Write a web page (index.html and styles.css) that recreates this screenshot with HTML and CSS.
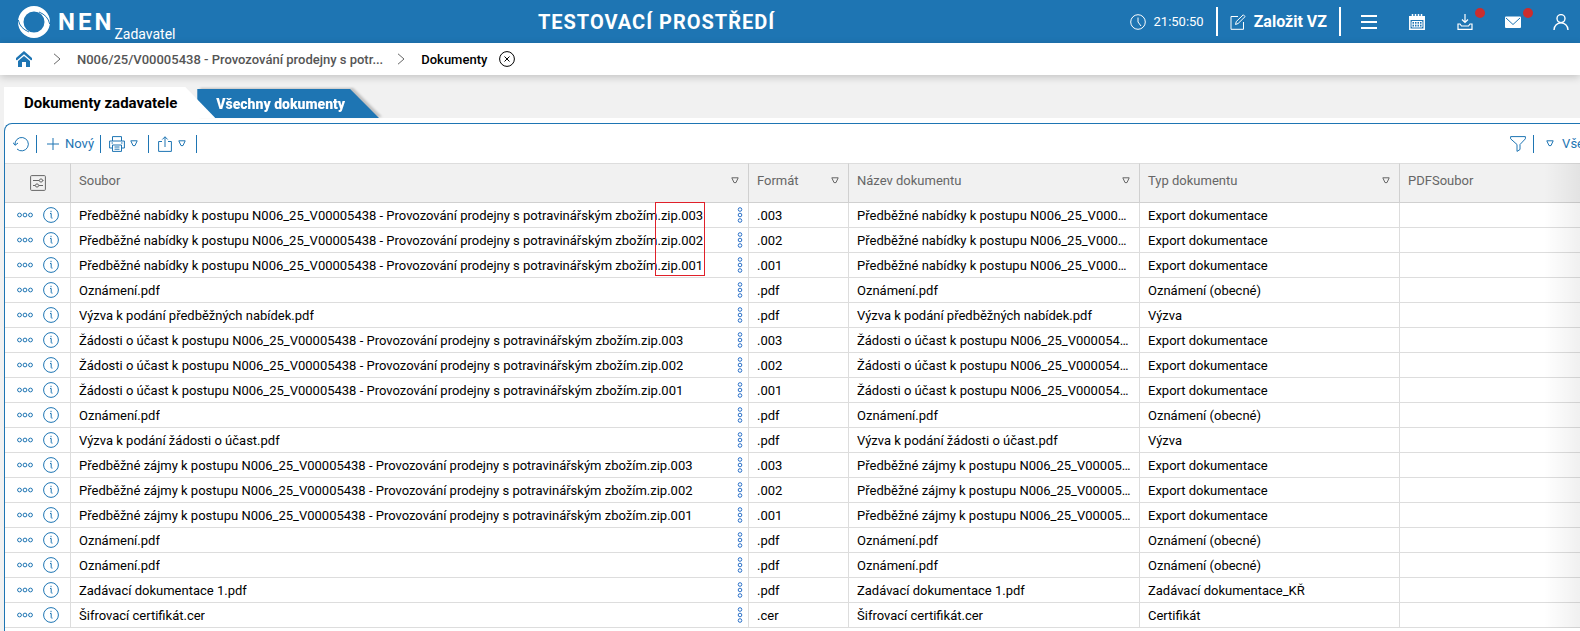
FILE: index.html
```html
<!DOCTYPE html>
<html lang="cs">
<head>
    <meta charset="UTF-8">
    <meta name="viewport" content="width=device-width, initial-scale=1.0">
    <title>NEN - Dokumenty</title>
    <link rel="stylesheet" href="styles.css">
</head>
<body>
    <svg class="sprite" aria-hidden="true">
        <symbol id="dots" viewBox="0 0 16 6"><circle cx="2.5" cy="3" r="1.9"/><circle cx="8" cy="3" r="1.9"/><circle cx="13.5" cy="3" r="1.9"/></symbol>
        <symbol id="vdots" viewBox="0 0 6 16"><circle cx="3" cy="2.5" r="1.8"/><circle cx="3" cy="8" r="1.8"/><circle cx="3" cy="13.5" r="1.8"/></symbol>
        <symbol id="info" viewBox="0 0 16 16"><circle cx="8" cy="8" r="7.4"/><path d="M7 6.5h1.2v4q0 .9 1.300 .6M8 3.800v1.400"/></symbol>
        <symbol id="tri" viewBox="0 0 8 7"><path d="M.8 .8h6.4L5 5.600H3z"/></symbol>
        <symbol id="chevron" viewBox="0 0 8 12"><path d="M1 .8l6 5.2-6 5.2"/></symbol>
    </svg>

    <header class="topbar">
        <a class="brand" href="#">
            <svg class="logo" viewBox="0 0 32 32" aria-hidden="true">
                <path class="ring" fill-rule="evenodd" d="M16 0a16 16 0 1 1 0 32a16 16 0 1 1 0-32zM16 5.500a10.500 10.500 0 1 0 0 21a10.500 10.500 0 1 0 0-21z"/>
                <path class="cut" d="M.3 14Q2 22.500 11 26M31.700 18Q30 9.500 21 6"/>
            </svg>
            <span class="brand-name">NEN</span>
            <span class="brand-role">Zadavatel</span>
        </a>
        <div class="env">TESTOVACÍ PROSTŘEDÍ</div>
        <div class="time">
            <svg class="icon" viewBox="0 0 16 16"><circle cx="8" cy="8" r="7.300"/><path d="M8 3.500V8l3 4"/></svg>
            21:50:50
        </div>
        <button class="create">
            <svg class="icon" viewBox="0 0 16 16"><path d="M8 2.500H1v12.800h12.500V8M5.500 10.500l.8-3 7-6.700 1.800 1.800-7 6.900z"/></svg>
            Založit VZ
        </button>
        <nav class="tools">
            <button aria-label="Menu"><svg class="icon thick" viewBox="0 0 16 16"><path d="M0 2h16M0 8h16M0 14h16"/></svg></button>
            <button aria-label="Kalendář"><svg class="icon" viewBox="0 0 16 16"><path d="M0 2h16v4H0z" fill="currentColor" stroke="none"/><path d="M.8 3v12.200h14.400V3M3.500 0v4M6.500 0v4M9.500 0v4M12.500 0v4" stroke-width="1.500"/><path d="M3 7.500h10v5.500H3zM5.500 7.500V13M8 7.500V13M10.500 7.500V13M3 10.200h10"/></svg></button>
            <button class="has-badge" aria-label="Stažené soubory"><svg class="icon" viewBox="0 0 16 16"><path d="M8 0v8M5 5.500l3 3 3-3M3 10H1v5.300h14V10h-2l-1.500 2h-7z" stroke-width="1.200"/></svg></button>
            <button class="has-badge" aria-label="Zprávy"><svg class="icon" viewBox="0 0 16 16"><rect x="0" y="2.500" width="16" height="11.500" rx="1" fill="currentColor" stroke="none"/><path class="fold" d="M1 4l7 6.500L15 4"/></svg></button>
            <button aria-label="Uživatel"><svg class="icon" viewBox="0 0 16 16"><circle cx="8" cy="4.600" r="4" stroke-width="1.400"/><path d="M1 16c0-9.500 14-9.500 14 0" stroke-width="1.400"/></svg></button>
        </nav>
    </header>

    <nav class="breadcrumb">
        <a class="home" href="#" aria-label="Domů"><svg viewBox="0 0 16 16"><path d="M8 0L0 7v2l1 .3L8 3.300l7 6 1-.3V7z"/><path d="M2 10l6-5 6 5v6h-4v-5H6v5H2z"/></svg></a>
        <svg class="chevron"><use href="#chevron"/></svg>
        <a class="parent" href="#">N006/25/V00005438 - Provozování prodejny s potr...</a>
        <svg class="chevron"><use href="#chevron"/></svg>
        <span class="current">Dokumenty</span>
        <button class="close" aria-label="Zavřít"><svg class="icon" viewBox="0 0 16 16"><circle cx="8" cy="8" r="7.400"/><path d="M5.500 5.500l5 5M10.500 5.500l-5 5"/></svg></button>
    </nav>

    <div class="tabs">
        <button class="tab active"><span>Dokumenty zadavatele</span></button>
        <button class="tab"><span>Všechny dokumenty</span></button>
    </div>

    <main class="content">
        <section class="panel">
            <div class="toolbar">
                <button aria-label="Obnovit"><svg class="icon" viewBox="0 0 16 16"><path d="M2 9A6.700 6.700 0 1 1 4 13M0 6.500l2 2.800L5 7"/></svg></button>
                <button class="new"><svg class="icon" viewBox="0 0 16 16"><path d="M8 2v12M2 8h12"/></svg>Nový</button>
                <button aria-label="Tisk"><svg class="icon" viewBox="0 0 16 16"><path d="M3.500 5V.6h9V5M3.500 12H.6V5h14.800v7h-2.900M3.500 9h9v6.400h-9zM5.500 11h5M5.500 13.200h5M12 7h1.500M2.500 7H4"/></svg><svg class="tri"><use href="#tri"/></svg></button>
                <button aria-label="Export"><svg class="icon" viewBox="0 0 16 16"><path d="M5 5.500H1.600v9.900h12.800V5.500H11M8 11V.8M5.300 3.500L8 .8l2.700 2.700"/></svg><svg class="tri"><use href="#tri"/></svg></button>
                <button class="filter" aria-label="Filtr"><svg class="icon" viewBox="0 0 16 16"><path d="M.6.6h14.800v2.200L10 8.500v5L7 15.400V8.500L.6 2.800z"/></svg></button>
                <button class="view"><svg class="tri"><use href="#tri"/></svg>Vše</button>
            </div>

            <div class="grid-wrap">
                <table class="grid">
                    <colgroup>
                        <col class="c-actions"><col class="c-file"><col class="c-format"><col class="c-name"><col class="c-type"><col>
                    </colgroup>
                    <thead>
                        <tr>
                            <th class="actions"><button aria-label="Nastavení sloupců"><svg class="icon" viewBox="0 0 16 16"><rect x=".6" y=".6" width="14.800" height="14.800" rx="1"/><path d="M3 5.500h6M12.500 5.500h1M3 10.500h2M9 10.500h4"/><circle cx="11" cy="5.500" r="1.600"/><circle cx="7" cy="10.500" r="1.600"/></svg></button></th>
                            <th><div class="cell">Soubor<svg class="tri"><use href="#tri"/></svg></div></th>
                            <th><div class="cell">Formát<svg class="tri"><use href="#tri"/></svg></div></th>
                            <th><div class="cell">Název dokumentu<svg class="tri"><use href="#tri"/></svg></div></th>
                            <th><div class="cell">Typ dokumentu<svg class="tri"><use href="#tri"/></svg></div></th>
                            <th><div class="cell">PDFSoubor</div></th>
                        </tr>
                    </thead>
                    <tbody id="rows"></tbody>
                </table>
                <div class="mark"></div>
            </div>
        </section>
    </main>
    <script src="rows.js"></script>
</body>
</html>
```

FILE: rows.js
```javascript
var suffix = ' k postupu N006_25_V00005438 - Provozování prodejny s potravinářským zbožím.zip';
var files = [
    ['Předběžné nabídky' + suffix, '.003', 'Export dokumentace'],
    ['Předběžné nabídky' + suffix, '.002', 'Export dokumentace'],
    ['Předběžné nabídky' + suffix, '.001', 'Export dokumentace'],
    ['Oznámení', '.pdf', 'Oznámení (obecné)'],
    ['Výzva k podání předběžných nabídek', '.pdf', 'Výzva'],
    ['Žádosti o účast' + suffix, '.003', 'Export dokumentace'],
    ['Žádosti o účast' + suffix, '.002', 'Export dokumentace'],
    ['Žádosti o účast' + suffix, '.001', 'Export dokumentace'],
    ['Oznámení', '.pdf', 'Oznámení (obecné)'],
    ['Výzva k podání žádosti o účast', '.pdf', 'Výzva'],
    ['Předběžné zájmy' + suffix, '.003', 'Export dokumentace'],
    ['Předběžné zájmy' + suffix, '.002', 'Export dokumentace'],
    ['Předběžné zájmy' + suffix, '.001', 'Export dokumentace'],
    ['Oznámení', '.pdf', 'Oznámení (obecné)'],
    ['Oznámení', '.pdf', 'Oznámení (obecné)'],
    ['Zadávací dokumentace 1', '.pdf', 'Zadávací dokumentace_KŘ'],
    ['Šifrovací certifikát', '.cer', 'Certifikát']
];

document.getElementById('rows').innerHTML = files.map(function (f) {
    var name = f[0] + f[1];
    return '<tr>' +
        '<td class="actions"><button aria-label="Akce"><svg class="dots"><use href="#dots"/></svg></button>' +
        '<button aria-label="Detail"><svg class="icon"><use href="#info"/></svg></button></td>' +
        '<td><div class="cell"><span class="text">' + name + '</span>' +
        '<button aria-label="Možnosti"><svg class="vdots"><use href="#vdots"/></svg></button></div></td>' +
        '<td>' + f[1] + '</td>' +
        '<td>' + name + '</td>' +
        '<td>' + f[2] + '</td>' +
        '<td></td>' +
        '</tr>';
}).join('');
```

FILE: styles.css
```css
* { box-sizing: border-box; }
body { margin: 0; font-family: Roboto, "Liberation Sans", sans-serif; font-size: 13px; color: #000; background-color: #f1f1f1; overflow: hidden; }
a { color: inherit; text-decoration: none; }
button { display: flex; align-items: center; background: none; border: none; padding: 0; color: inherit; font: inherit; cursor: pointer; }
svg { flex: none; fill: none; stroke: currentColor; }
.sprite { position: absolute; width: 0; height: 0; }
.icon { width: 16px; height: 16px; }
.thick { stroke-width: 2; }
.tri { width: 8px; height: 7px; }

/* top bar */
.topbar { display: flex; align-items: center; height: 43px; padding: 0 11px 0 18px; background-color: #1e75b3; color: white; }
.brand { display: flex; align-items: center; }
.logo { width: 32px; height: 32px; }
.ring { fill: white; stroke: none; }
.cut { stroke: #1e75b3; }
.brand-name { margin-left: 8px; font-size: 24px; font-weight: 700; letter-spacing: 3px; }
.brand-role { align-self: flex-end; padding-top: 24px; font-size: 14px; }
.env { flex: 1; padding-left: 8px; text-align: center; font-size: 20px; font-weight: 700; letter-spacing: 1px; }
.time { display: flex; align-items: center; gap: 8px; padding-right: 12px; }
.create { gap: 8px; height: 29px; padding: 0 12px; border-left: 2px solid white; border-right: 2px solid white; font-size: 16px; font-weight: 700; }
.tools { display: flex; gap: 32px; margin-left: 20px; }
.has-badge { position: relative; }
.has-badge::after { content: ""; position: absolute; top: -6px; right: -12px; width: 10px; height: 10px; border-radius: 50%; background-color: #cb2d2d; }
.fold { stroke: #1e75b3; }

/* breadcrumb */
.breadcrumb { display: flex; align-items: center; height: 32px; padding-left: 16px; background-color: white; box-shadow: 0 2px 8px rgba(0,0,0,0.2); font-weight: 500; }
.home svg { display: block; width: 16px; height: 16px; fill: #1e75b3; stroke: none; }
.chevron { width: 8px; height: 12px; margin: 0 16px 0 14px; color: #666; }
.home + .chevron { margin-left: 21px; }
.parent { color: #555; }
.close { margin-left: 12px; }

/* tabs */
.tabs { display: flex; padding: 12px 0 0 4px; height: 43px; }
.tab { align-items: flex-end; height: 31px; font-size: 14px; font-weight: 900; filter: drop-shadow(3px -1px 1px rgba(0,0,0,0.2)); }
.tab span { display: flex; align-items: center; height: 29px; padding: 0 34px 0 19px; background-color: #1e75b3; color: white; clip-path: polygon(0 0, calc(100% - 29px) 0, 100% 100%, 0 100%); }
.tab + .tab { margin-left: -18px; }
.tab.active { position: relative; z-index: 1; font-size: 15px; font-weight: 700; filter: none; }
.tab.active span { height: 31px; padding: 0 38px 0 20px; background-color: white; color: #000; clip-path: polygon(0 0, calc(100% - 30px) 0, 100% 100%, 0 100%); }

/* panel */
.content { margin-left: 4px; padding-top: 5px; background-color: white; }
.panel { min-height: calc(100vh - 123px); border-top: 1px solid #1e75b3; border-left: 1px solid #1e75b3; border-top-left-radius: 8px; }
.toolbar { display: flex; align-items: center; height: 39px; padding-left: 8px; color: #1e75b3; }
.toolbar button { height: 18px; gap: 5px; padding-right: 10px; margin-right: 8px; border-right: 1px solid #1e75b3; }
.toolbar button:first-child { padding-right: 7px; }
.toolbar .new { gap: 4px; padding-right: 6px; }
.toolbar .filter { margin-left: auto; margin-right: 12px; padding-right: 7px; }
.toolbar .view { gap: 8px; padding: 0; margin-right: -4px; border: none; }

/* grid */
.grid-wrap { position: relative; }
.grid-wrap::after { content: ""; position: absolute; top: 0; right: 0; bottom: 0; width: 36px; background: linear-gradient(to right, transparent, rgba(0,0,0,0.06)); }
.grid { width: 100%; border-collapse: separate; border-spacing: 0; table-layout: fixed; }
.c-actions { width: 66px; }
.c-file { width: 678px; }
.c-format { width: 100px; }
.c-name { width: 291px; }
.c-type { width: 260px; }
.grid th { height: 40px; padding: 0 9px 5px 8px; background-color: #f1f1f1; border-top: 1px solid #ddd; border-bottom: 1px solid #d0d0d0; border-right: 1px solid #d0d0d0; color: #666; font-weight: 400; text-align: left; }
.grid td { height: 25px; padding: 0 8px; border-bottom: 1px solid #ddd; border-right: 1px solid #ddd; white-space: nowrap; overflow: hidden; text-overflow: ellipsis; }
.grid th:last-child, .grid td:last-child { border-right: none; }
.grid td:nth-child(2) { padding-right: 5px; }
.cell { display: flex; align-items: center; justify-content: space-between; }
.text { overflow: hidden; text-overflow: ellipsis; }
.grid th.actions { padding: 0 0 0 25px; }
.grid td.actions { padding: 0 0 0 12px; color: #1e75b3; }
.actions button { display: inline-flex; vertical-align: middle; }
.actions button + button { margin-left: 10px; }
.dots { width: 16px; height: 6px; }
.vdots { width: 6px; height: 16px; color: #2a70c8; }
.mark { position: absolute; top: 39px; left: 650px; width: 50px; height: 74px; border: 1px solid #e0202a; }
```
